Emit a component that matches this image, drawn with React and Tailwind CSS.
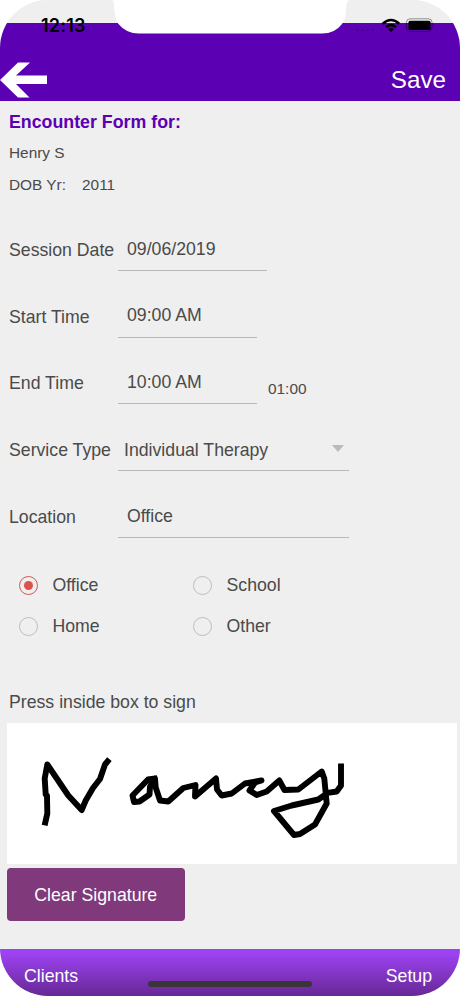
function StatusBar() {
  return (
    <div className="relative h-[23px] bg-[#efefef]">
      <svg className="absolute left-0 top-0" width="460" height="48" viewBox="0 0 460 48">
        <path d="M112 0Q113.500 0 114 6C114.500 14 115.500 20 118.500 24Q126 33.500 139 33.500H322Q335 33.500 342 24Q346 19 346 9Q346.500 1 349 0Z" fill="#fff" />
        <g fill="#3c0080">
          <circle cx="357.500" cy="30" r="1" />
          <circle cx="362.500" cy="30" r="1" />
          <circle cx="367.500" cy="30" r="1" />
          <circle cx="372.500" cy="30" r="1" />
        </g>
        <g fill="none" stroke="#000" strokeWidth="2.500">
          <path d="M382.800 23.700Q391 16.400 399.200 23.700" />
          <path d="M386 27.200Q391 23 396 27.200" />
        </g>
        <path d="M388 29.200Q391 27 394 29.200L391 32Z" />
        <rect x="406.500" y="18.800" width="25.500" height="12.700" rx="3.500" fill="none" stroke="#000" strokeOpacity=".4" />
        <rect x="408.500" y="20.700" width="22" height="9.200" rx="1.500" />
        <path d="M433 23Q435 25 433 27Z" fillOpacity=".4" />
      </svg>
      <span className="absolute left-[41px] top-[16px] font-[Inter] text-[18px] leading-5 font-semibold tracking-[0.2px] text-black">12:13</span>
    </div>
  );
}

function Field({ label, value, width, children, select }) {
  return (
    <div className="flex h-[66.750px] items-end pl-[9px]">
      <div className="mb-[11px] w-[109px] leading-5 whitespace-nowrap">{label}</div>
      <div className={`flex h-9 items-start justify-between border-b border-[#b9b9b9] ${width}`}>
        <span className={select ? 'pt-[5px] pl-[6px] leading-5' : 'pt-[3.750px] pl-[9px] leading-5'}>{value}</span>
        {select && (
          <svg className="mt-[10px] mr-[5px]" width="12" height="7" viewBox="0 0 12 7">
            <path d="M0 0H12L6 7Z" fill="#bababa" />
          </svg>
        )}
      </div>
      {children}
    </div>
  );
}

function Radio({ label, checked }) {
  return (
    <div className="flex h-[41px] w-[174px] items-center">
      <span className={`flex size-[19px] items-center justify-center rounded-full border ${checked ? 'border-[#de5349]' : 'border-[#bebebe]'}`}>
        {checked && <span className="size-[9px] rounded-full bg-[#de5349]" />}
      </span>
      <span className="pt-px pl-[14.500px]">{label}</span>
    </div>
  );
}

export default function App() {
  return (
    <div className="h-[996px] w-[460px] overflow-hidden bg-white">
      <div className="flex h-[996px] flex-col overflow-hidden rounded-[48px] bg-[#efefef] font-['Liberation_Sans',Arial,sans-serif] text-[17.700px] text-[#4a4a4a]">
        <StatusBar />
        <header className="flex h-[78px] items-center justify-between bg-[#5b00b3] pt-[36px] pr-[14px] text-white">
          <svg width="48" height="36" viewBox="0 0 48 36">
            <path d="M0 18L18 0.500H30L16 13.500H47V22H16L29.500 35.500H18Z" fill="#fff" />
          </svg>
          <span className="text-[24.200px] leading-7">Save</span>
        </header>

        <main className="flex flex-1 flex-col">
          <div className="pl-[9px]">
            <h1 className="pt-[11px] text-[17.800px] leading-5 font-bold text-[#5b00b3]">Encounter Form for:</h1>
            <p className="pt-[11px] text-[15.400px] leading-5">Henry S</p>
            <p className="flex gap-4 pt-3 text-[15.400px] leading-5">
              <span>DOB Yr:</span>
              <span>2011</span>
            </p>
          </div>

          <div className="mt-[9px]">
            <Field label="Session Date" value="09/06/2019" width="w-[149px]" />
            <Field label="Start Time" value="09:00 AM" width="w-[139px]" />
            <Field label="End Time" value="10:00 AM" width="w-[139px]">
              <span className="mb-[5px] pl-[11px] text-[15.400px] leading-5">01:00</span>
            </Field>
            <Field label="Service Type" value="Individual Therapy" width="w-[231px]" select />
            <Field label="Location" value="Office" width="w-[231px]" />
          </div>

          <div className="mt-[26.750px] flex flex-wrap pl-[19px]">
            <Radio label="Office" checked />
            <Radio label="School" />
            <Radio label="Home" />
            <Radio label="Other" />
          </div>

          <p className="mt-[45.250px] pl-[9px] leading-5">Press inside box to sign</p>

          <div className="mt-[10.750px] mr-[3px] ml-[7px] h-[141px] bg-white">
            <svg width="450" height="141" viewBox="7 722.500 450 141">
              <g fill="none" stroke="#000" strokeWidth="5.900" strokeLinejoin="round" strokeLinecap="square">
                <path d="M45.300 822L47.300 813L47 795L45.700 794L44.700 778L47.300 764L68.300 795L81.700 809.500L85.700 800L93 787.500L100 778.500L105 764L107.500 761" />
                <path d="M154.500 778L148 779L132.500 795L134 801.500L139.500 801L149.500 794L150 786L155 778L155.700 787L160 800L168.300 801L183.300 787.500L195.500 784.500L195 796L216 778L217 789L221.700 795L231.700 793L245 783L261.500 780L255 782L249.500 790L256.700 794.500L266.700 791L279.300 780L284.500 789.500L298.300 789L321.700 771L324.300 778L326.700 803L315 824L300 833.500L294 834.500L274 810.500L291.700 805L318.300 799L327.700 792.300L336.700 791L341 785V766" />
              </g>
            </svg>
          </div>

          <button className="mt-[4px] ml-[7px] h-[53.500px] w-[177.500px] rounded-[4px] bg-[#80397a] pt-[2px] text-white">Clear Signature</button>
        </main>

        <footer className="relative flex h-[47px] items-start justify-between bg-linear-to-b from-[#9d42f2] from-10% to-[#672894] pt-[17px] pr-[28px] pl-[24px] leading-5 text-white">
          <span>Clients</span>
          <span>Setup</span>
          <span className="absolute top-8 left-[148px] h-[6px] w-[164px] rounded-full bg-[#393539]" />
        </footer>
      </div>
    </div>
  );
}
